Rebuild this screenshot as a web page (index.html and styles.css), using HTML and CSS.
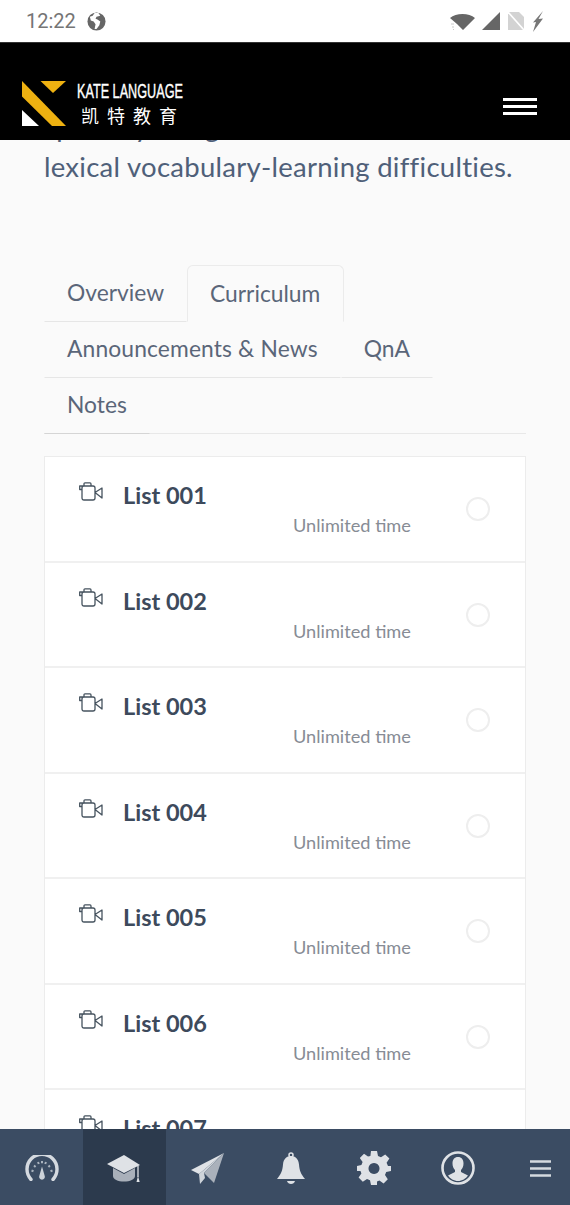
FILE: index.html
```html
<!DOCTYPE html>
<html lang="en">
<head>
<meta charset="utf-8">
<title>Kate Language</title>
<link rel="stylesheet" href="styles.css">
</head>
<body>
<div class="app">
  <div class="statusbar">
    <div class="status-left">
      <span class="clock">12:22</span>
      <svg class="globe" viewBox="0 0 20 20"><circle cx="10" cy="10" r="9.5" fill="#666"/><path d="M8 1 6 4 3 5l1 4 3 1 2 3-1 5h2l3-4 1-4-3-2-2-1 1-2 4-1-2-3z" fill="#fff"/></svg>
    </div>
    <div class="status-right">
      <svg class="s-wifi" viewBox="0 0 25 18"><path d="M0 6C6 .5 19 .5 25 6L13 18l-6-6z" fill="#666"/><path d="M1 12h3M2 15h2M3 17.500h1" stroke="#ccc" stroke-width="1"/></svg>
      <svg class="s-signal" viewBox="0 0 18 18"><path d="M18 0v18H0z" fill="#666"/></svg>
      <svg class="s-sim" viewBox="0 0 16 18"><path d="M0 0h11l5 5v13H0z" fill="#d3d3d3"/><path d="M0 0l16 18" stroke="#fff" stroke-width="1.6"/></svg>
      <svg class="s-bolt" viewBox="0 0 12 21"><path d="M11 0 6.500 8 11 7.500 1 21l3-10-3 .5z" fill="#777"/></svg>
    </div>
  </div>
  <header class="topbar">
    <div class="brand">
      <svg class="logo" viewBox="0 0 44 45">
        <path d="M0 0 44 45H30L0 15.500z" fill="#eeb111"/>
        <path d="M18.500 0H44L31 12z" fill="#eeb111"/>
        <path d="M0 29 17 45H0z" fill="#fff"/>
      </svg>
      <div class="brand-text">
        <span class="brand-en">KATE LANGUAGE</span>
        <span class="brand-cn">凯特教育</span>
      </div>
    </div>
    <button class="burger" aria-label="Menu"><i></i><i></i><i></i></button>
  </header>
  <main class="content">
    <div class="scrolled">
      <p class="intro">specially designed to address<br>lexical vocabulary-learning difficulties.</p>
      <nav class="tabs">
        <a class="tab">Overview</a>
        <a class="tab active">Curriculum</a>
        <a class="tab tab-wide">Announcements &amp; News</a>
        <a class="tab">QnA</a>
        <a class="tab tab-notes">Notes</a>
      </nav>
      <ul class="lessons">
        <li class="lesson"><svg class="cam" viewBox="0 0 24 19"><use href="#cam"/></svg><div class="lesson-body"><h3>List 001</h3><span class="time">Unlimited time</span></div><span class="check"></span></li>
        <li class="lesson"><svg class="cam" viewBox="0 0 24 19"><use href="#cam"/></svg><div class="lesson-body"><h3>List 002</h3><span class="time">Unlimited time</span></div><span class="check"></span></li>
        <li class="lesson"><svg class="cam" viewBox="0 0 24 19"><use href="#cam"/></svg><div class="lesson-body"><h3>List 003</h3><span class="time">Unlimited time</span></div><span class="check"></span></li>
        <li class="lesson"><svg class="cam" viewBox="0 0 24 19"><use href="#cam"/></svg><div class="lesson-body"><h3>List 004</h3><span class="time">Unlimited time</span></div><span class="check"></span></li>
        <li class="lesson"><svg class="cam" viewBox="0 0 24 19"><use href="#cam"/></svg><div class="lesson-body"><h3>List 005</h3><span class="time">Unlimited time</span></div><span class="check"></span></li>
        <li class="lesson"><svg class="cam" viewBox="0 0 24 19"><use href="#cam"/></svg><div class="lesson-body"><h3>List 006</h3><span class="time">Unlimited time</span></div><span class="check"></span></li>
        <li class="lesson"><svg class="cam" viewBox="0 0 24 19"><use href="#cam"/></svg><div class="lesson-body"><h3>List 007</h3><span class="time">Unlimited time</span></div><span class="check"></span></li>
      </ul>
    </div>
  </main>
  <nav class="bottomnav">
    <a class="nav-item"><svg class="i-gauge" viewBox="0 0 34 26"><path d="M6 24.500A15 15 0 1 1 28 24.500" fill="none" stroke="#d5dae0" stroke-width="3.400" stroke-linecap="round"/><path d="M17 11.500l2.600 9a2.900 2.900 0 1 1-5.200 0z" fill="#cdd3da"/><path d="M6.500 15.500l2 .8M9 10.500l1.600 1.400M13 7l.8 2M17 6v2.200M21 7l-.8 2M25 10.500l-1.600 1.400M27.500 15.500l-2 .8" stroke="#aab3be" stroke-width="2"/></svg></a>
    <a class="nav-item is-active"><svg class="i-cap" viewBox="0 0 35 27"><path d="M6 13v8c0 3.500 5 5.500 11 5.500s11-2 11-5.500v-8l-11 6z" fill="#a9b0ba"/><path d="M17 0 0 9l17 9 16-8z" fill="#dfe2e6"/><path d="M31 10.500V22" stroke="#dfe2e6" stroke-width="1.300"/><path d="M29.500 27l1.500-6 1.700 6z" fill="#dfe2e6"/></svg></a>
    <a class="nav-item"><svg class="i-plane" viewBox="0 0 33 31"><path d="M33 0 0 17l8 4z" fill="#dfe2e6"/><path d="M33 0 8 21l1 10 5-6-1-5z" fill="#cfd4da"/><path d="M33 0 13 20l10 10z" fill="#aab1bb"/></svg></a>
    <a class="nav-item"><svg class="i-bell" viewBox="0 0 28 33"><circle cx="14" cy="3" r="2" fill="none" stroke="#dfe2e6" stroke-width="1.500"/><path d="M14 4c4.500 0 7.500 3 8 8.500.5 6.500 2 9.500 6 14.500H0c4-5 5.500-8 6-14.500C6.500 7 9.500 4 14 4z" fill="#dfe2e6"/><path d="M10 29h8c-1 4-7 4-8 0z" fill="#dfe2e6"/></svg></a>
    <a class="nav-item"><svg class="i-gear" viewBox="0 0 34 34"><path fill-rule="evenodd" fill="#dfe2e6" d="M14 0h6l1 5 3 1.200 4.200-2.800 4.200 4.200-2.800 4.200L31 15l3 0v5l-4.800 1-1.200 3 2.800 4.200-4.200 4.200-4.200-2.800-2.400 1L20 34h-6l-1-4.800-3-1.200-4.200 2.800-4.200-4.200L4.400 22.400 3.500 20 0 20v-5l4.400-1 1.200-3-2.800-4 4.200-4.200L11 5.600 13.400 5zM17 12a5.500 5.500 0 1 0 .01 0z"/></svg></a>
    <a class="nav-item"><svg class="i-user" viewBox="0 0 34 34"><circle cx="17" cy="17" r="15.500" fill="none" stroke="#dfe2e6" stroke-width="2.600"/><path d="M17 6c3.500 0 5.500 2.500 5.500 6.500 0 3-1 5-2.500 6.500v2l7 3.500c-2 3-6 5.500-10 5.500s-8-2.500-10-5.500l7-3.500v-2c-1.500-1.500-2.500-3.500-2.500-6.500C11.500 8.500 13.500 6 17 6z" fill="#dfe2e6"/></svg></a>
    <a class="nav-item"><svg class="i-bars" viewBox="0 0 21 17"><path d="M0 1.500h21M0 8.500h21M0 15.500h21" stroke="#d5dae0" stroke-width="2.400"/></svg></a>
  </nav>
</div>
<svg class="defs" aria-hidden="true"><defs><symbol id="cam" viewBox="0 0 24 19"><path d="M5 4h9c1.300 0 2 .7 2 2v10c0 1.300-.7 2-2 2H5c-1.300 0-2-.7-2-2V6c0-1.300.7-2 2-2zM3 7.500H.7V4H5V2c0-.7.4-1.200 1-1.200h5c.7 0 1 .5 1 1.200v2M16 10.500 23 6v10z" fill="none" stroke="#46535f" stroke-width="1.300" stroke-linejoin="round"/></symbol></defs></svg>
</body>
</html>
```
FILE: styles.css
```css
* { box-sizing: border-box; }
html, body { margin: 0; padding: 0; height: 100%; }
body { font-family: Lato, "Noto Sans", sans-serif; background: #fafafa; overflow: hidden; }
.defs { display: none; }
.app { display: flex; flex-direction: column; height: 1205px; width: 570px; overflow: hidden; }

.statusbar { flex: 0 0 42px; background: #fff; display: flex; align-items: center; justify-content: space-between; padding: 0 26px; }
.status-left { display: flex; align-items: center; gap: 11px; }
.clock { font-family: Roboto, sans-serif; font-size: 20px; color: #757575; }
.globe { width: 19px; height: 19px; }
.status-right { display: flex; align-items: center; gap: 8px; }
.s-wifi { width: 25px; height: 18px; margin-right: -1px; }
.s-signal { width: 18px; height: 18px; }
.s-sim { width: 16px; height: 18px; }
.s-bolt { width: 12px; height: 21px; }

.topbar { flex: 0 0 98px; background: #000; display: flex; justify-content: space-between; align-items: flex-end; padding: 0 33px 14px 22px; border-top: 1px solid #333; }
.brand { display: flex; align-items: center; gap: 11px; }
.logo { width: 44px; height: 45px; }
.brand-text { display: flex; flex-direction: column; color: #fff; width: 106px; }
.brand-en { font-family: "Liberation Sans", sans-serif; font-size: 20.500px; line-height: 22px; white-space: nowrap; transform: scaleX(.617); transform-origin: left center; -webkit-text-stroke: .4px #fff; }
.brand-cn { font-family: "Noto Sans CJK SC", sans-serif; font-size: 18px; line-height: 24px; letter-spacing: 8px; margin: 1px 0 -1px 4px; white-space: nowrap; }
.burger { border: 0; background: none; padding: 0; width: 34px; margin-bottom: 11px; display: flex; flex-direction: column; gap: 4px; }
.burger i { display: block; height: 3px; background: #fff; }

.content { flex: 1 1 auto; min-height: 0; overflow: hidden; background: #fafafa; }
.scrolled { margin-top: -33px; padding: 0 44px; }
.intro { margin: 0; font-size: 27.500px; line-height: 40px; letter-spacing: .27px; color: #4f6079; white-space: nowrap; }

.tabs { display: flex; flex-wrap: wrap; margin-top: 79px; border-bottom: 1px solid #e8e8e8; width: 482px; font-size: 22.800px; color: #5a6679; }
.tab { display: block; padding: 11px 22px 0; height: 56px; line-height: 28px; border: 1px solid transparent; border-bottom: 1px solid #e6e6e6; white-space: nowrap; }
.tab.active { background: #fafafa; padding-top: 13px; height: 57px; margin-top: -1px; border-color: #ebebeb #ebebeb transparent; border-radius: 6px 6px 0 0; width: 157px; }
.tab-wide { letter-spacing: .14px; }
.tab-notes { border-bottom-color: #d5d5d5; margin-bottom: -1px; }

.lessons { list-style: none; margin: 22px 0 0; padding: 0; width: 482px; background: #fff; border: 1px solid #ececec; border-bottom: 0; }
.lesson { display: flex; height: 105.500px; border-bottom: 2px solid #f0f0f0; padding: 25px 35px 0 34px; }
.cam { width: 24px; height: 19px; flex: none; }
.lesson-body { flex: 1; padding-left: 20px; }
.lesson-body h3 { margin: 0; font-size: 23.500px; line-height: 26px; font-weight: 700; color: #3d4a5c; }
.time { display: block; margin: 5px 0 0 170px; font-size: 18.200px; line-height: 24px; color: #878c95; }
.check { width: 24px; height: 24px; margin-top: 15px; flex: none; border: 2px solid #eeeeee; border-radius: 50%; }

.bottomnav { flex: 0 0 76px; display: flex; background: #3b4c63; overflow: hidden; }
.nav-item { flex: 0 0 83.200px; display: flex; align-items: center; justify-content: center; padding-top: 2px; }
.nav-item.is-active { background: #2c3a4d; }
.i-gauge { width: 34px; height: 26px; }
.i-cap { width: 35px; height: 27px; }
.i-plane { width: 33px; height: 31px; }
.i-bell { width: 28px; height: 33px; }
.i-gear { width: 34px; height: 34px; }
.i-user { width: 34px; height: 34px; }
.i-bars { width: 21px; height: 17px; }
```
